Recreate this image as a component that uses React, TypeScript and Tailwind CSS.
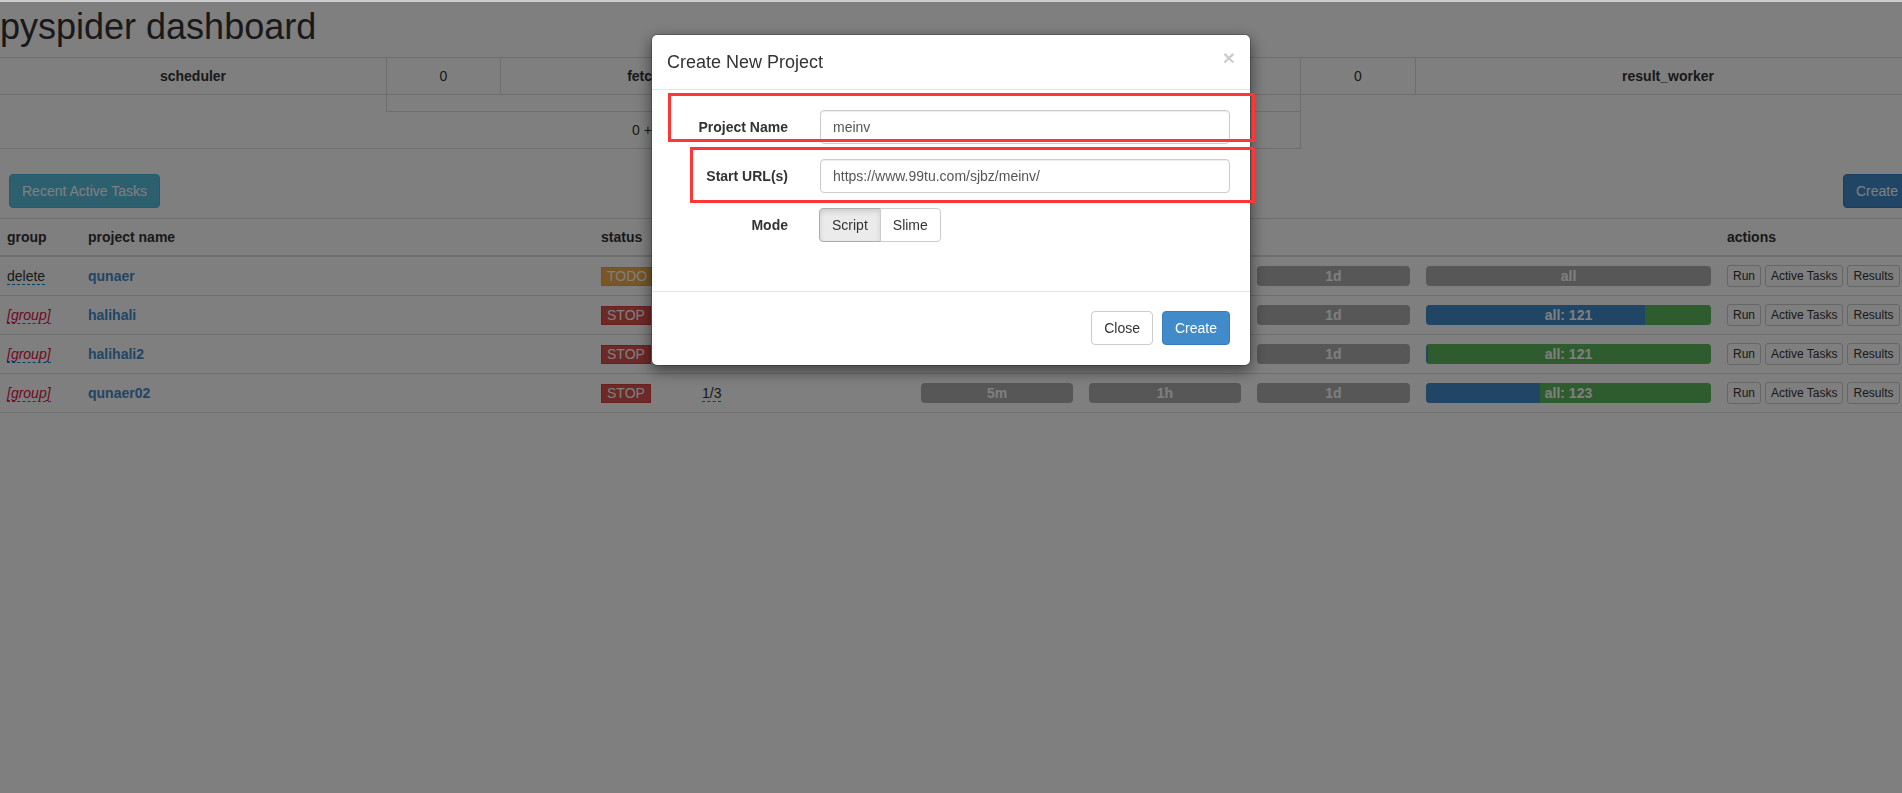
import React from "react";

type Row = {
  group: string;
  empty: boolean;
  name: string;
  status: "TODO" | "STOP";
  rate: string;
  all: { blue: number; green: number; label: string };
};

const rows: Row[] = [
  { group: "delete", empty: false, name: "qunaer", status: "TODO", rate: "1/3", all: { blue: 0, green: 0, label: "all" } },
  { group: "[group]", empty: true, name: "halihali", status: "STOP", rate: "1/3", all: { blue: 76.8, green: 23.2, label: "all: 121" } },
  { group: "[group]", empty: true, name: "halihali2", status: "STOP", rate: "1/3", all: { blue: 0.6, green: 99.4, label: "all: 121" } },
  { group: "[group]", empty: true, name: "qunaer02", status: "STOP", rate: "1/3", all: { blue: 40, green: 60, label: "all: 123" } },
];

function Bar({ label, blue = 0, green = 0 }: { label: string; blue?: number; green?: number }) {
  return (
    <div className="relative h-[20px] w-full overflow-hidden rounded-[4px] bg-[#aeaeae]">
      <div className="flex h-full">
        {blue > 0 && <div className="h-full bg-[#428bca]" style={{ width: `${blue}%` }} />}
        {green > 0 && <div className="h-full bg-[#5cb85c]" style={{ width: `${green}%` }} />}
      </div>
      <div className="absolute inset-0 flex items-center justify-center text-[14px] font-bold leading-[20px] text-white">
        {label}
      </div>
    </div>
  );
}

function XsBtn({ children }: { children: React.ReactNode }) {
  return (
    <span className="inline-flex h-[22px] items-center rounded-[3px] border border-[#cccccc] bg-white px-[5px] text-[12px] leading-[18px] text-[#333]">
      {children}
    </span>
  );
}

export default function App() {
  return (
    <div className="relative h-[793px] w-full overflow-hidden bg-white font-['Liberation_Sans',Arial,sans-serif] text-[14px] leading-[20px] text-[#333]">
      <div className="w-[1920px] pt-[7px]">
        <h1 className="m-0 text-[36px] font-normal leading-[39.6px] text-[#333]">pyspider dashboard</h1>

        {/* queue info */}
        <div className="mt-[10px] border-t border-[#dddddd]">
          <div className="grid grid-cols-[387px_114px_300px_115px_385px_115px_1fr] border-b border-[#dddddd]">
            <div className="flex h-[36px] items-center justify-center border-r border-[#dddddd] font-bold">scheduler</div>
            <div className="flex h-[36px] items-center justify-center border-r border-[#dddddd]">0</div>
            <div className="flex h-[36px] items-center justify-center border-r border-[#dddddd] font-bold">fetcher</div>
            <div className="flex h-[36px] items-center justify-center border-r border-[#dddddd]">0</div>
            <div className="flex h-[36px] items-center justify-center border-r border-[#dddddd] font-bold">processor</div>
            <div className="flex h-[36px] items-center justify-center border-r border-[#dddddd]">0</div>
            <div className="flex h-[36px] items-center justify-center font-bold">result_worker</div>
          </div>
          <div className="grid grid-cols-[386px_915px_1fr]">
            <div className="h-[54px] border-b border-[#dddddd]" />
            <div className="border-r border-b border-[#dddddd]">
              <div className="h-[17px] border-l border-b border-[#dddddd]" />
              <div className="flex h-[36px] items-center pl-[246px]">0 + 0</div>
            </div>
            <div />
          </div>
        </div>

        {/* buttons */}
        <div className="mt-[25px] flex items-center justify-between">
          <button className="ml-[9px] h-[34px] rounded-[4px] border border-[#46b8da] bg-[#5bc0de] px-[12px] text-[14px] text-white">
            Recent Active Tasks
          </button>
          <button className="mr-[9px] h-[34px] rounded-[4px] border border-[#357ebd] bg-[#428bca] px-[12px] text-[14px] text-white">
            Create
          </button>
        </div>

        {/* projects */}
        <table className="mt-[10px] w-[1920px] table-fixed border-collapse">
          <colgroup>
            <col className="w-[80px]" />
            <col className="w-[513px]" />
            <col className="w-[101px]" />
            <col className="w-[106px]" />
            <col className="w-[113px]" />
            <col className="w-[168px]" />
            <col className="w-[168px]" />
            <col className="w-[169px]" />
            <col className="w-[301px]" />
            <col />
          </colgroup>
          <thead>
            <tr className="border-t border-b-2 border-[#dddddd]">
              <th className="py-[8px] pl-[7px] text-left font-bold">group</th>
              <th className="px-[8px] py-[8px] text-left font-bold">project name</th>
              <th className="px-[8px] py-[8px] text-left font-bold">status</th>
              <th className="px-[8px] py-[8px]" />
              <th className="px-[8px] py-[8px]" />
              <th className="px-[8px] py-[8px]" colSpan={4} />
              <th className="px-[8px] py-[8px] text-left font-bold">actions</th>
            </tr>
          </thead>
          <tbody>
            {rows.map((r) => (
              <tr key={r.name} className="h-[39px] border-b border-[#dddddd]">
                <td className="py-[8px] pl-[7px] align-middle">
                  <span
                    className={
                      r.empty
                        ? "border-b border-dashed border-[#0088cc] italic text-[#dd1144]"
                        : "border-b border-dashed border-[#0088cc] text-[#333]"
                    }
                  >
                    {r.group}
                  </span>
                </td>
                <td className="px-[8px] py-[8px] align-middle">
                  <span className="font-bold text-[#428bca]">{r.name}</span>
                </td>
                <td className="px-[8px] py-[8px] align-middle">
                  <span
                    className={
                      r.status === "TODO"
                        ? "inline-block border border-[#eea236] bg-[#f0ad4e] px-[5px] text-[14px] leading-[17px] text-white"
                        : "inline-block border border-[#d43f3a] bg-[#d9534f] px-[5px] text-[14px] leading-[17px] text-white"
                    }
                  >
                    {r.status}
                  </span>
                </td>
                <td className="px-[8px] py-[8px] align-middle">
                  <span className="border-b border-dashed border-[#0088cc]">{r.rate}</span>
                </td>
                <td className="px-[8px] py-[8px] align-middle" />
                <td className="px-[8px] py-[8px] align-middle">
                  <Bar label="5m" />
                </td>
                <td className="px-[8px] py-[8px] align-middle">
                  <Bar label="1h" />
                </td>
                <td className="px-[8px] py-[8px] align-middle">
                  <Bar label="1d" />
                </td>
                <td className="px-[8px] py-[8px] align-middle">
                  <Bar label={r.all.label} blue={r.all.blue} green={r.all.green} />
                </td>
                <td className="py-[8px] pl-[8px] align-middle">
                  <div className="flex gap-[4px] whitespace-nowrap">
                    <XsBtn>Run</XsBtn>
                    <XsBtn>Active Tasks</XsBtn>
                    <XsBtn>Results</XsBtn>
                  </div>
                </td>
              </tr>
            ))}
          </tbody>
        </table>
      </div>

      {/* backdrop */}
      <div className="fixed inset-0 z-10 bg-black/50" />
      <div className="fixed left-0 right-0 top-0 z-20 h-[2px] bg-[#cccccc]" />

      {/* modal */}
      <div className="fixed inset-0 z-30 flex justify-center">
        <div className="mt-[34px] h-fit w-[600px] rounded-[6px] border border-black/20 bg-white bg-clip-padding shadow-[0_5px_15px_rgba(0,0,0,0.5)]">
          <div className="flex items-start justify-between border-b border-[#e5e5e5] p-[15px]">
            <h4 className="m-0 text-[18px] font-normal leading-[24px] text-[#333]">Create New Project</h4>
            <span className="mt-[-3px] text-[21px] font-bold leading-[21px] text-black opacity-20">×</span>
          </div>
          <div className="px-[20px] pt-[20px] pb-[49px]">
            <div className="mb-[15px] flex items-center">
              <label className="w-[116px] text-right font-bold text-[#333]">Project Name</label>
              <div className="ml-[32px] flex-1">
                <input
                  defaultValue="meinv"
                  className="h-[34px] w-full rounded-[4px] border border-[#cccccc] px-[12px] text-[14px] text-[#555] shadow-[inset_0_1px_1px_rgba(0,0,0,0.075)] outline-none"
                />
              </div>
            </div>
            <div className="mb-[15px] flex items-center">
              <label className="w-[116px] text-right font-bold text-[#333]">Start URL(s)</label>
              <div className="ml-[32px] flex-1">
                <input
                  defaultValue="https://www.99tu.com/sjbz/meinv/"
                  className="h-[34px] w-full rounded-[4px] border border-[#cccccc] px-[12px] text-[14px] text-[#555] shadow-[inset_0_1px_1px_rgba(0,0,0,0.075)] outline-none"
                />
              </div>
            </div>
            <div className="flex items-center">
              <label className="w-[116px] text-right font-bold text-[#333]">Mode</label>
              <div className="ml-[31px] flex">
                <span className="flex h-[34px] items-center rounded-l-[4px] border border-[#adadad] bg-[#ebebeb] px-[12px] text-[#333] shadow-[inset_0_3px_5px_rgba(0,0,0,0.125)]">
                  Script
                </span>
                <span className="-ml-px flex h-[34px] items-center rounded-r-[4px] border border-[#cccccc] bg-white px-[12px] text-[#333]">
                  Slime
                </span>
              </div>
            </div>
          </div>
          <div className="flex justify-end gap-[9px] border-t border-[#e5e5e5] px-[20px] pt-[19px] pb-[20px]">
            <button className="h-[34px] rounded-[4px] border border-[#cccccc] bg-white px-[12px] text-[14px] text-[#333]">Close</button>
            <button className="h-[34px] rounded-[4px] border border-[#357ebd] bg-[#428bca] px-[12px] text-[14px] text-white">Create</button>
          </div>
        </div>
      </div>

      {/* annotation boxes */}
      <div className="absolute left-[668px] top-[93px] z-40 h-[49px] w-[587px] border-[3px] border-[#ff3636]" />
      <div className="absolute left-[690px] top-[147px] z-40 h-[56px] w-[565px] border-[3px] border-[#ff3636]" />
    </div>
  );
}
